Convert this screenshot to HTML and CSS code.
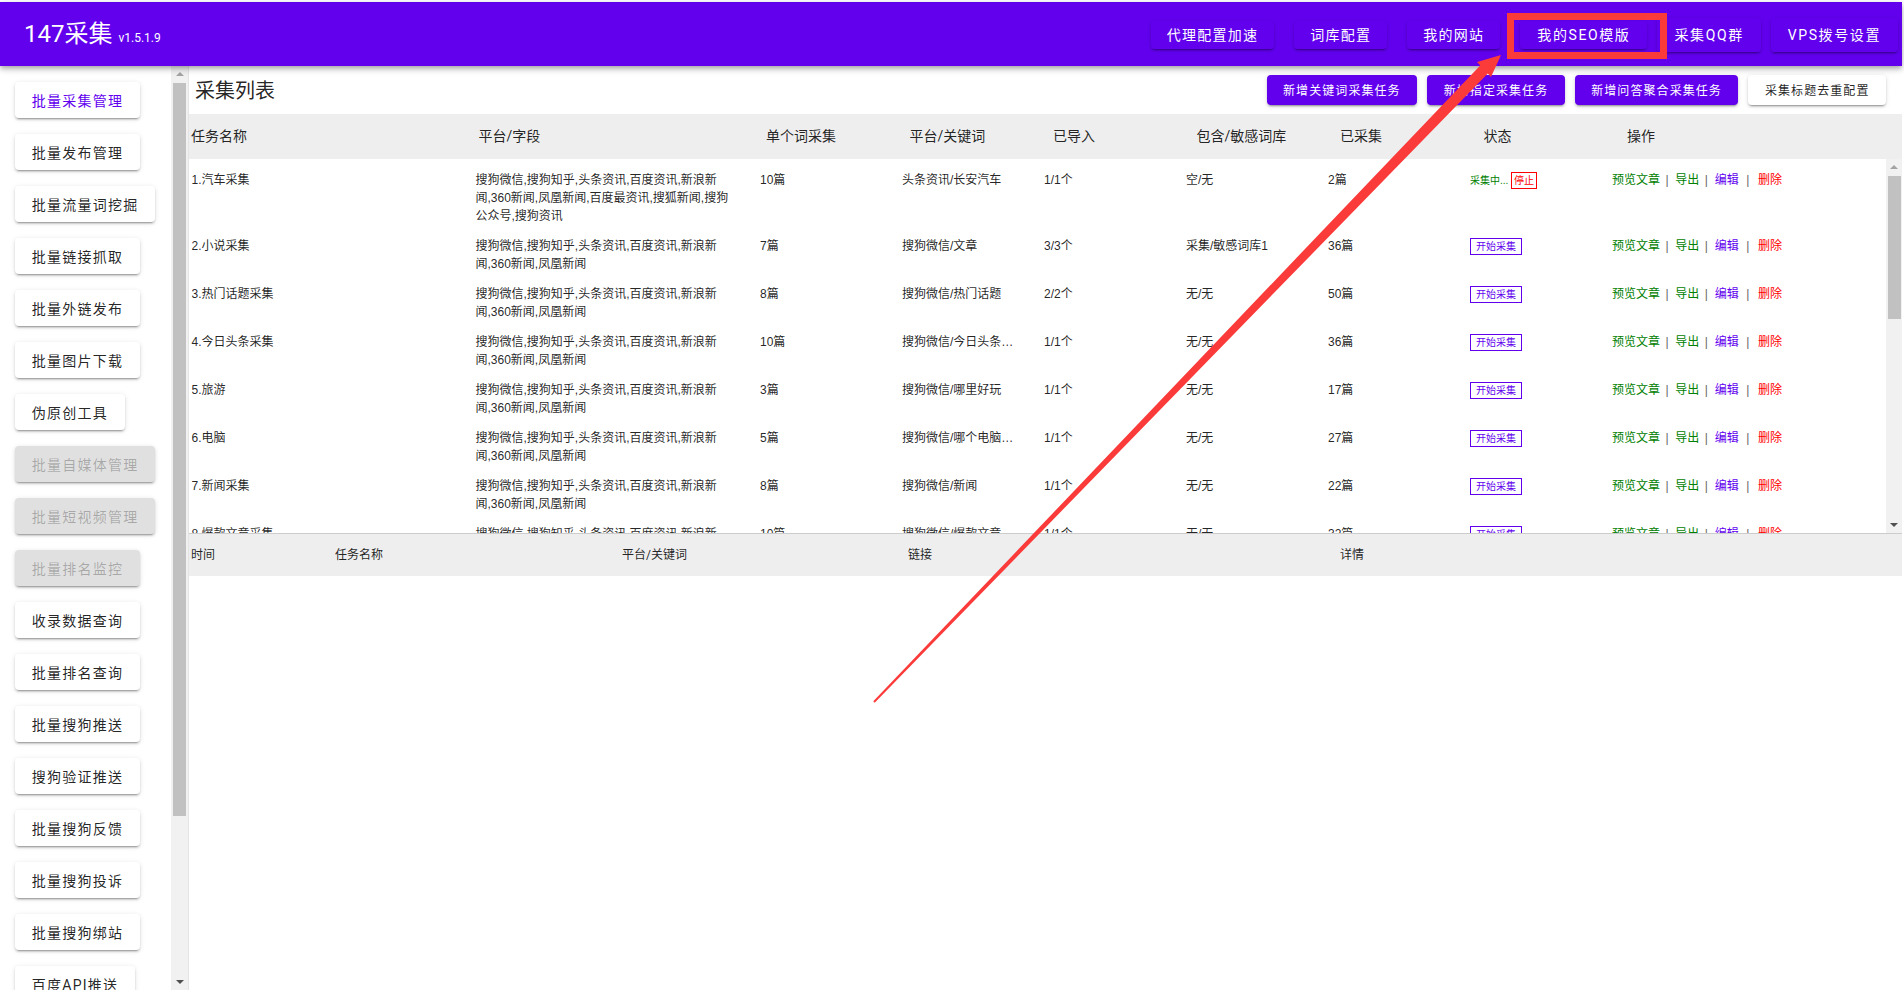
FILE: index.html
```html
<!DOCTYPE html>
<html lang="zh-CN">
<head>
<meta charset="utf-8">
<title>147采集</title>
<link rel="stylesheet" href="styles.css">
</head>
<body>
<div class="page">
  <header class="topbar">
    <div class="brand"><span class="brand-name">147采集</span><span class="brand-ver">v1.5.1.9</span></div>
    <nav class="topnav">
      <button class="tbtn tbtn-sm">代理配置加速</button>
      <button class="tbtn tbtn-sm">词库配置</button>
      <button class="tbtn tbtn-sm">我的网站</button>
      <button class="tbtn tbtn-sm tbtn-latin">我的SEO模版</button>
      <button class="tbtn tbtn-lg tbtn-latin tbtn-qq">采集QQ群</button>
      <button class="tbtn tbtn-lg tbtn-latin">VPS拨号设置</button>
    </nav>
  </header>
  <div class="main">
    <aside class="sidebar">
      <nav class="side-list">
        <button class="sbtn sbtn-active">批量采集管理</button>
        <button class="sbtn">批量发布管理</button>
        <button class="sbtn">批量流量词挖掘</button>
        <button class="sbtn">批量链接抓取</button>
        <button class="sbtn">批量外链发布</button>
        <button class="sbtn">批量图片下载</button>
        <button class="sbtn">伪原创工具</button>
        <button class="sbtn sbtn-off">批量自媒体管理</button>
        <button class="sbtn sbtn-off">批量短视频管理</button>
        <button class="sbtn sbtn-off">批量排名监控</button>
        <button class="sbtn">收录数据查询</button>
        <button class="sbtn">批量排名查询</button>
        <button class="sbtn">批量搜狗推送</button>
        <button class="sbtn">搜狗验证推送</button>
        <button class="sbtn">批量搜狗反馈</button>
        <button class="sbtn">批量搜狗投诉</button>
        <button class="sbtn">批量搜狗绑站</button>
        <button class="sbtn">百度API推送</button>
      </nav>
      <div class="vbar vbar-side">
        <i class="arrow arrow-up"></i>
        <b class="thumb thumb-side"></b>
        <i class="arrow arrow-down"></i>
      </div>
    </aside>
    <section class="content">
      <div class="titlebar">
        <h1 class="page-title">采集列表</h1>
        <div class="actions">
          <button class="abtn">新增关键词采集任务</button>
          <button class="abtn">新增指定采集任务</button>
          <button class="abtn">新增问答聚合采集任务</button>
          <button class="abtn abtn-plain">采集标题去重配置</button>
        </div>
      </div>
      <div class="thead">
        <span>任务名称</span><span>平台/字段</span><span>单个词采集</span><span>平台/关键词</span><span>已导入</span><span>包含/敏感词库</span><span>已采集</span><span>状态</span><span>操作</span>
      </div>
      <div class="tbody-wrap">
        <div class="tbody">
          <div class="row">
            <span>1.汽车采集</span>
            <span class="wrap">搜狗微信,搜狗知乎,头条资讯,百度资讯,新浪新闻,360新闻,凤凰新闻,百度最资讯,搜狐新闻,搜狗公众号,搜狗资讯</span>
            <span>10篇</span><span class="kw">头条资讯/长安汽车</span><span>1/1个</span><span>空/无</span><span>2篇</span>
            <span class="status"><em class="running">采集中...</em><button class="tag tag-stop">停止</button></span>
            <span class="ops"><a class="op-view">预览文章</a><i class="sep">|</i><a class="op-view">导出</a><i class="sep sep-b">|</i><a class="op-edit">编辑</a><i class="sep sep-c">|</i><a class="op-del">删除</a></span>
          </div>
          <div class="row">
            <span>2.小说采集</span>
            <span class="wrap">搜狗微信,搜狗知乎,头条资讯,百度资讯,新浪新闻,360新闻,凤凰新闻</span>
            <span>7篇</span><span class="kw">搜狗微信/文章</span><span>3/3个</span><span>采集/敏感词库1</span><span>36篇</span>
            <span class="status"><button class="tag">开始采集</button></span>
            <span class="ops"><a class="op-view">预览文章</a><i class="sep">|</i><a class="op-view">导出</a><i class="sep sep-b">|</i><a class="op-edit">编辑</a><i class="sep sep-c">|</i><a class="op-del">删除</a></span>
          </div>
          <div class="row">
            <span>3.热门话题采集</span>
            <span class="wrap">搜狗微信,搜狗知乎,头条资讯,百度资讯,新浪新闻,360新闻,凤凰新闻</span>
            <span>8篇</span><span class="kw">搜狗微信/热门话题</span><span>2/2个</span><span>无/无</span><span>50篇</span>
            <span class="status"><button class="tag">开始采集</button></span>
            <span class="ops"><a class="op-view">预览文章</a><i class="sep">|</i><a class="op-view">导出</a><i class="sep sep-b">|</i><a class="op-edit">编辑</a><i class="sep sep-c">|</i><a class="op-del">删除</a></span>
          </div>
          <div class="row">
            <span>4.今日头条采集</span>
            <span class="wrap">搜狗微信,搜狗知乎,头条资讯,百度资讯,新浪新闻,360新闻,凤凰新闻</span>
            <span>10篇</span><span class="kw">搜狗微信/今日头条采集</span><span>1/1个</span><span>无/无</span><span>36篇</span>
            <span class="status"><button class="tag">开始采集</button></span>
            <span class="ops"><a class="op-view">预览文章</a><i class="sep">|</i><a class="op-view">导出</a><i class="sep sep-b">|</i><a class="op-edit">编辑</a><i class="sep sep-c">|</i><a class="op-del">删除</a></span>
          </div>
          <div class="row">
            <span>5.旅游</span>
            <span class="wrap">搜狗微信,搜狗知乎,头条资讯,百度资讯,新浪新闻,360新闻,凤凰新闻</span>
            <span>3篇</span><span class="kw">搜狗微信/哪里好玩</span><span>1/1个</span><span>无/无</span><span>17篇</span>
            <span class="status"><button class="tag">开始采集</button></span>
            <span class="ops"><a class="op-view">预览文章</a><i class="sep">|</i><a class="op-view">导出</a><i class="sep sep-b">|</i><a class="op-edit">编辑</a><i class="sep sep-c">|</i><a class="op-del">删除</a></span>
          </div>
          <div class="row">
            <span>6.电脑</span>
            <span class="wrap">搜狗微信,搜狗知乎,头条资讯,百度资讯,新浪新闻,360新闻,凤凰新闻</span>
            <span>5篇</span><span class="kw">搜狗微信/哪个电脑好用</span><span>1/1个</span><span>无/无</span><span>27篇</span>
            <span class="status"><button class="tag">开始采集</button></span>
            <span class="ops"><a class="op-view">预览文章</a><i class="sep">|</i><a class="op-view">导出</a><i class="sep sep-b">|</i><a class="op-edit">编辑</a><i class="sep sep-c">|</i><a class="op-del">删除</a></span>
          </div>
          <div class="row">
            <span>7.新闻采集</span>
            <span class="wrap">搜狗微信,搜狗知乎,头条资讯,百度资讯,新浪新闻,360新闻,凤凰新闻</span>
            <span>8篇</span><span class="kw">搜狗微信/新闻</span><span>1/1个</span><span>无/无</span><span>22篇</span>
            <span class="status"><button class="tag">开始采集</button></span>
            <span class="ops"><a class="op-view">预览文章</a><i class="sep">|</i><a class="op-view">导出</a><i class="sep sep-b">|</i><a class="op-edit">编辑</a><i class="sep sep-c">|</i><a class="op-del">删除</a></span>
          </div>
          <div class="row">
            <span>8.爆款文章采集</span>
            <span class="wrap">搜狗微信,搜狗知乎,头条资讯,百度资讯,新浪新闻,360新闻,凤凰新闻</span>
            <span>10篇</span><span class="kw">搜狗微信/爆款文章</span><span>1/1个</span><span>无/无</span><span>32篇</span>
            <span class="status"><button class="tag">开始采集</button></span>
            <span class="ops"><a class="op-view">预览文章</a><i class="sep">|</i><a class="op-view">导出</a><i class="sep sep-b">|</i><a class="op-edit">编辑</a><i class="sep sep-c">|</i><a class="op-del">删除</a></span>
          </div>
        </div>
        <div class="vbar vbar-table">
          <i class="arrow arrow-up"></i>
          <b class="thumb thumb-table"></b>
          <i class="arrow arrow-down"></i>
        </div>
      </div>
      <div class="loghead">
        <span>时间</span><span>任务名称</span><span>平台/关键词</span><span>链接</span><span>详情</span>
      </div>
    </section>
  </div>
  <svg class="annotation" width="1904" height="990" viewBox="0 0 1904 990" aria-hidden="true">
    <rect class="anno-box" x="1510.5" y="16.5" width="153" height="39"/>
    <polygon class="anno-arrow" points="1501,55 1477,62 1480.2,65.4 873.3,701.3 874.7,702.7 1487.8,73.6 1491,77"/>
  </svg>
</div>
</body>
</html>
```
FILE: styles.css
```css
* { box-sizing: border-box; }
html, body { margin: 0; padding: 0; background: #fff; }
body {
  font-family: Roboto, "Noto Sans CJK SC", sans-serif;
  color: rgba(0, 0, 0, .87);
  overflow: hidden;
}
button { font-family: inherit; border: 0; cursor: pointer; white-space: nowrap; }

.page {
  position: relative;
  width: 1904px;
  height: 990px;
  padding: 2px 2px 0 0;
  display: flex;
  flex-direction: column;
  overflow: hidden;
}

/* top bar */
.topbar {
  flex: none;
  height: 64px;
  background: #6200ee;
  color: #fff;
  display: flex;
  justify-content: space-between;
  align-items: center;
  padding: 0 4px 0 24px;
  position: relative;
  z-index: 2;
  box-shadow: 0 2px 4px -1px rgba(0,0,0,.2), 0 4px 5px 0 rgba(0,0,0,.14), 0 1px 10px 0 rgba(0,0,0,.12);
}
.brand { display: flex; align-items: baseline; }
.brand-name { font-size: 24px; line-height: 32px; }
.brand-ver { font-size: 12px; margin-left: 6px; }
.topnav { display: flex; align-items: center; padding-top: 2px; }
.tbtn {
  background: #6200ee;
  color: #fff;
  font-size: 14px;
  letter-spacing: 1.25px;
  padding: 0 16px 2px;
  border-radius: 4px;
  margin-left: 20px;
  box-shadow: 0 3px 1px -2px rgba(0,0,0,.2), 0 2px 2px 0 rgba(0,0,0,.14), 0 1px 5px 0 rgba(0,0,0,.12);
}
.tbtn-sm { height: 28px; }
.tbtn-lg { height: 34px; margin-left: 10px; }
.tbtn-latin { padding-left: 17px; padding-right: 17px; letter-spacing: 1.6px; }
.tbtn-qq { margin-left: 10px; }

/* main */
.main { flex: 1; display: flex; min-height: 0; }
.sidebar {
  flex: none;
  width: 189px;
  display: flex;
  border-right: 1px solid #e4e4e4;
  overflow: hidden;
}
.side-list {
  flex: none;
  width: 171px;
  padding: 16px 0 0 15px;
  display: flex;
  flex-direction: column;
  align-items: flex-start;
  gap: 16px;
}
.sbtn {
  flex: none;
  height: 36px;
  padding: 0 16.75px;
  background: #fff;
  color: rgba(0,0,0,.87);
  font-size: 14px;
  letter-spacing: 1.25px;
  border-radius: 4px;
  box-shadow: 0 3px 1px -2px rgba(0,0,0,.2), 0 2px 2px 0 rgba(0,0,0,.14), 0 1px 5px 0 rgba(0,0,0,.12);
}
.sbtn-active { color: #6200ee; }
.sbtn-off { background: #e0e0e0; color: rgba(0,0,0,.26); }

/* fake scrollbars */
.vbar {
  flex: none;
  width: 17px;
  background: #f1f1f1;
  display: flex;
  flex-direction: column;
  align-items: center;
  position: relative;
}
.thumb { display: block; width: 13px; background: #c1c1c1; }
.thumb-side { height: 733px; margin-top: 0; }
.thumb-table { height: 143px; }
.vbar-side { padding-top: 17px; height: 924px; }
.vbar-table { width: 16px; padding-top: 17px; height: 374px; }
.arrow { position: absolute; width: 0; height: 0; border-left: 4px solid transparent; border-right: 4px solid transparent; }
.arrow-up { top: 6px; border-bottom: 4px solid #a3a3a3; }
.arrow-down { bottom: 6px; border-top: 4px solid #505050; }

/* content */
.content { flex: 1; min-width: 0; display: flex; flex-direction: column; }
.titlebar {
  flex: none;
  height: 48px;
  display: flex;
  justify-content: space-between;
  align-items: center;
  padding: 0 16px 0 6px;
}
.page-title { margin: 1px 0 0; font-size: 20px; font-weight: 400; line-height: 28px; }
.actions { display: flex; gap: 10px; }
.abtn {
  height: 30px;
  padding: 0 16.5px 2px;
  background: #6200ee;
  color: #fff;
  font-size: 12px;
  letter-spacing: 1.07px;
  border-radius: 4px;
  box-shadow: 0 3px 1px -2px rgba(0,0,0,.2), 0 2px 2px 0 rgba(0,0,0,.14), 0 1px 5px 0 rgba(0,0,0,.12);
}
.abtn-plain { background: #fff; color: rgba(0,0,0,.87); }

.thead {
  flex: none;
  height: 45px;
  background: #eee;
  display: grid;
  grid-template-columns: 287.5px 287.5px repeat(6, 143.5px) 1fr;
  align-items: center;
  padding: 0 0 4px 2px;
  font-size: 14px;
}
.tbody-wrap {
  flex: none;
  height: 375px;
  display: flex;
  border-bottom: 1px solid #ccc;
  overflow: hidden;
}
.tbody {
  flex: 1;
  min-width: 0;
  padding-left: 2.5px;
  font-family: "Liberation Sans", "Noto Sans CJK SC", sans-serif;
  font-size: 12px;
  line-height: 18px;
}
.row {
  display: grid;
  grid-template-columns: 284px 284.5px repeat(6, 142px) 1fr;
  padding-top: 12px;
}
.wrap { padding-right: 28px; word-break: break-all; }
.kw { width: 112px; white-space: nowrap; overflow: hidden; text-overflow: ellipsis; }
.status { display: flex; align-items: flex-start; }
.running { font-style: normal; font-size: 10px; color: #008000; line-height: 20px; width: 41px; }
.tag {
  height: 17px;
  margin-top: 1px;
  padding: 0 5px;
  border: 1px solid #6200ee;
  background: #fff;
  color: #6200ee;
  font-family: inherit;
  font-size: 10px;
  line-height: 15px;
}
.tag-stop { padding: 0 2px; border-color: #f00; color: #f00; }
.ops { white-space: nowrap; }
.ops a { text-decoration: none; }
.op-view { color: #008000; }
.op-edit { color: #6200ee; }
.op-del { color: #f00; }
.sep { font-style: normal; color: #666; margin: 0 6.5px 0 5.5px; }
.sep-b { margin: 0 7px 0 5.5px; }
.sep-c { margin: 0 8.5px 0 7.5px; }

.loghead {
  flex: none;
  height: 42px;
  background: #eee;
  display: grid;
  grid-template-columns: 144px 287px 286px 432px 1fr;
  align-items: center;
  padding: 0 0 3px 2px;
  font-size: 12px;
}

/* annotation overlay */
.annotation { position: absolute; left: 0; top: 0; z-index: 5; pointer-events: none; }
.anno-box { fill: none; stroke: #fb3a3a; stroke-width: 7; }
.anno-arrow { fill: #fb3a3a; }
```
